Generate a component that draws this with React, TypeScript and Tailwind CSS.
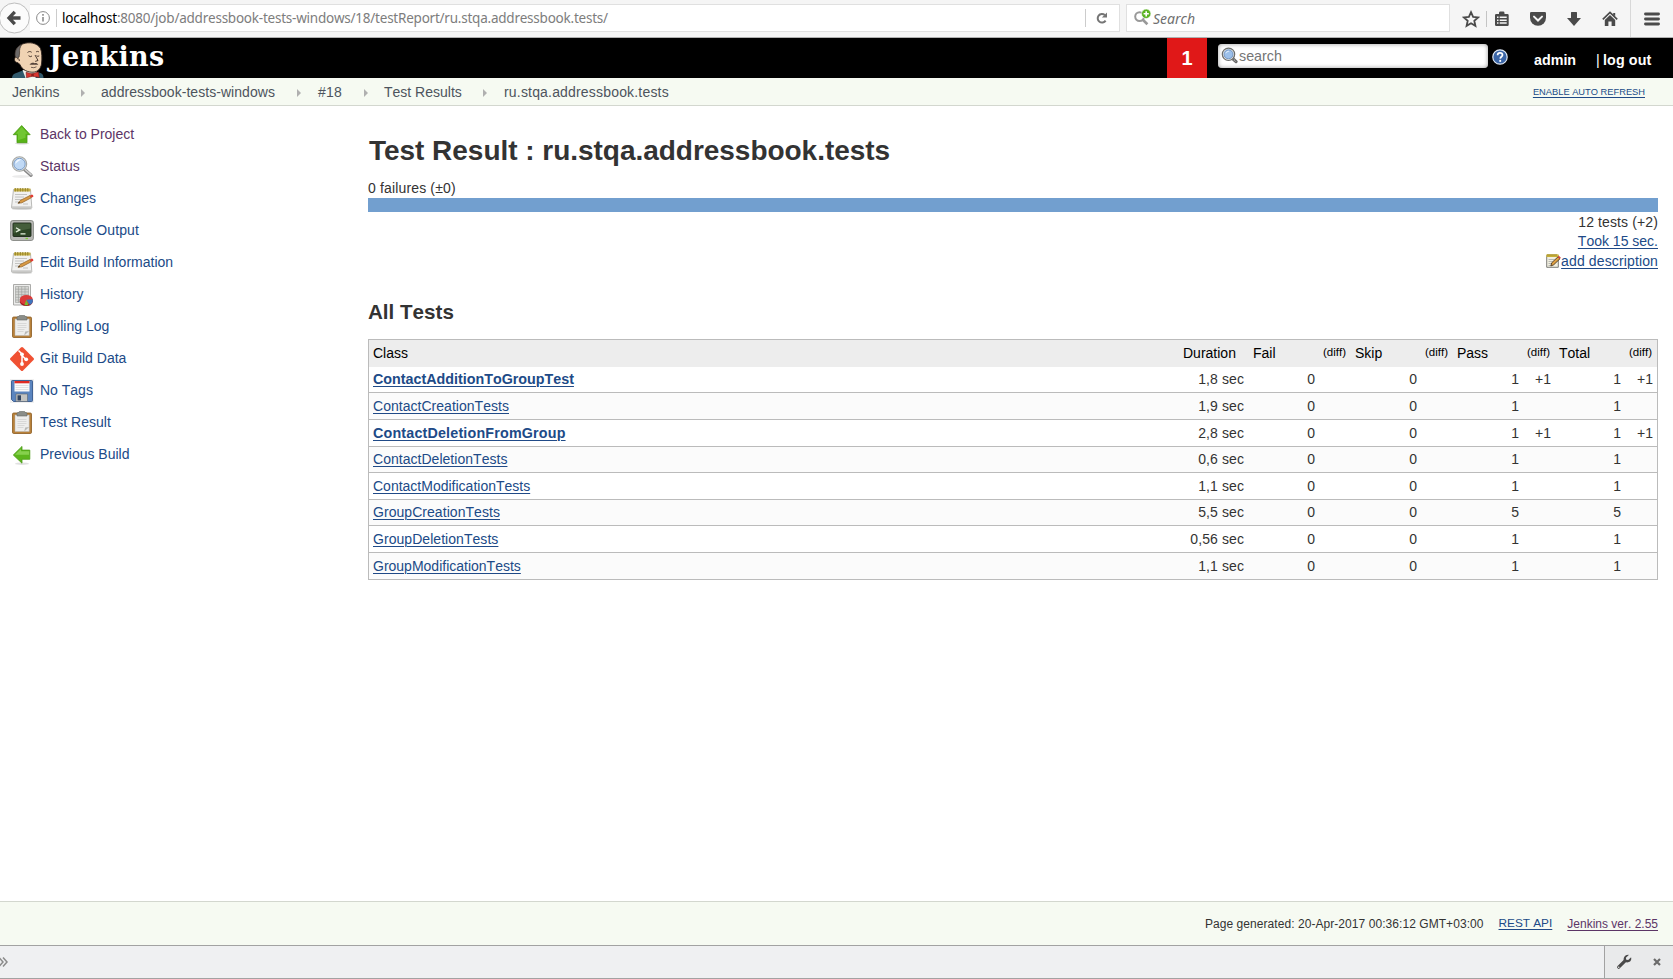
import React from "react";

type IconProps = { className?: string };

const BackArrow = () => (
  <svg viewBox="0 0 30 32" className="h-8 w-[30px] shrink-0">
    <circle cx="14.4" cy="16" r="15" fill="#fbfbfb" stroke="#bdbdbd" strokeWidth="1" />
    <path d="M20.500 16H10.500M14.800 9.800L9 16l5.800 6.200" fill="none" stroke="#4a4a4a" strokeWidth="3.300" />
  </svg>
);

const InfoIcon = () => (
  <svg viewBox="0 0 16 16" className="size-4 shrink-0">
    <circle cx="8" cy="8" r="6.4" fill="none" stroke="#8a8a8a" />
    <path d="M8 7v4.6M8 4v1.7" stroke="#8a8a8a" strokeWidth="1.6" />
  </svg>
);

const ReloadIcon = () => (
  <svg viewBox="0 0 14 14" className="size-3.5 shrink-0">
    <path d="M10.6 9.6A4.3 4.3 0 1 1 9.8 4" fill="none" stroke="#757575" strokeWidth="2" />
    <path d="M12 1.500v5.100H6.900z" fill="#757575" />
  </svg>
);

const BrowserSearchIcon = () => (
  <svg viewBox="0 0 20 18" className="h-[18px] w-5 shrink-0">
    <circle cx="6.6" cy="7.600" r="4.4" fill="none" stroke="#999" strokeWidth="2" />
    <path d="M9.8 10.800l4.600 4.400" stroke="#999" strokeWidth="2.6" />
    <circle cx="13.2" cy="4.800" r="4.700" fill="#5bb321" stroke="#fff" strokeWidth=".6" />
    <path d="M13.2 2.200v5.200M10.600 4.800h5.200" stroke="#fff" strokeWidth="1.6" />
  </svg>
);

const StarIcon = () => (
  <svg viewBox="0 0 18 18" className="size-[18px] shrink-0">
    <path d="M9 2.200l2.1 4.700 5 .5-3.800 3.400 1.100 5L9 13.200l-4.400 2.600 1.100-5L1.900 7.400l5-.5z" fill="none" stroke="#4a4a4a" strokeWidth="1.8" />
  </svg>
);

const ClipboardIcon = () => (
  <svg viewBox="0 0 16 16" className="size-4 shrink-0">
    <path d="M1 4.200Q1 3 2.200 3H5V2q0-1.400 1.400-1.400h2.700Q10.500.6 10.500 2v1h3q1.200 0 1.200 1.200v9.500q0 1.300-1.200 1.300H2.200Q1 15 1 13.700z" fill="#4a4a4a" />
    <path d="M3 6.300h1.500M5.700 6.300h7M3 9.200h1.500M5.700 9.200h7M3 12.100h1.500M5.700 12.100h7" stroke="#f5f5f5" strokeWidth="1.500" />
  </svg>
);

const PocketIcon = () => (
  <svg viewBox="0 0 18 16" className="h-4 w-[18px] shrink-0">
    <path d="M2.300 1h13.400Q17 1 17 2.300v4.500a8 8 0 0 1-16 0V2.300Q1 1 2.300 1z" fill="#4a4a4a" />
    <path d="M5 5.600l4 3.900 4-3.900" fill="none" stroke="#f5f5f5" strokeWidth="2" strokeLinecap="round" />
  </svg>
);

const DownloadIcon = () => (
  <svg viewBox="0 0 16 16" className="size-4 shrink-0">
    <path d="M5 1.600Q5 1 5.600 1h4.800q.6 0 .6.6V7h4L8 15 1 7h4z" fill="#4a4a4a" />
  </svg>
);

const HomeIcon = () => (
  <svg viewBox="0 0 16 16" className="size-4 shrink-0">
    <path d="M.8 8.300L8 1.400l7.200 6.900" fill="none" stroke="#4a4a4a" strokeWidth="1.700" />
    <path d="M2.800 9L8 4l5.200 5v6H9.600v-4.500H6.400V15H2.800z" fill="#4a4a4a" />
    <path d="M11.200 2h2v3.500l-2-2z" fill="#4a4a4a" />
  </svg>
);

const MenuIcon = () => (
  <svg viewBox="0 0 16 14" className="h-3.5 w-4 shrink-0">
    <path d="M1.500 2h13M1.500 7h13M1.500 12h13" stroke="#4a4a4a" strokeWidth="2.900" strokeLinecap="round" />
  </svg>
);

const ButlerLogo = () => (
  <svg viewBox="0 0 34 36" className="h-9 w-[34px] shrink-0">
    <path d="M1 36c0-3 2-4.500 5-5.200l5-2 14 1 4.500 1.200c2 .6 3 2.500 3 5z" fill="#31596b" />
    <path d="M11.500 28l3 8h10l1.500-7z" fill="#f4f1ec" />
    <path d="M6.500 20.500C3.300 20.500 2.800 17 4.500 15 3.500 9 6 4 11.500 2 18-.5 26.500.8 29.500 6.500 31 10 31.200 17 30.500 22c-.8 5-4 8-8.500 8.200-5 .2-11-2.200-13-7.700z" fill="#f0d3b3" stroke="#2e231d" strokeWidth=".9" />
    <path d="M4.300 15C3.200 9.500 5.500 4.500 11 2.300 9 5 8.300 7.500 8.600 11l-.5 4-1.500 1z" fill="#6c6968" stroke="#2e231d" strokeWidth=".6" />
    <path d="M5.800 17c1.500-1 2.700 0 2.500 2M16.500 10.500c1.500-1.300 3-1.200 4.200-.2M25 10c1-.8 2-.8 3 0M17.500 13.700q1.800 1.800 3.500.3M25.500 13.700q1.200 1.200 2.700.2M24 13l3 5.500-2.800.9" fill="none" stroke="#3b2a22" strokeWidth=".9" />
    <path d="M18.500 22.600c1.500-1.700 3.500-2.200 5-1.300 1.500-.6 3 .2 3.800 1.400-2.500-.3-5.500.6-8.800-.1z" fill="#54433a" />
    <path d="M20 25.300q3 1.100 5.500-.5" fill="none" stroke="#54433a" strokeWidth=".8" />
    <path d="M15 30.200l6 1.600 6.500-2 .8 5.700-6.800-1.300-6 1.600z" fill="#d8352f" stroke="#5b1513" strokeWidth=".5" />
    <path d="M20.300 31.600h2.500v2.800h-2.500z" fill="#8e1d1a" />
  </svg>
);

const Magnifier = ({ className }: IconProps) => (
  <svg viewBox="0 0 24 24" className={className}>
    <ellipse cx="11" cy="21.500" rx="9" ry="1.500" fill="#000" opacity=".08" />
    <path d="M14.500 14.500l6.500 5.700" stroke="#858585" strokeWidth="3.400" strokeLinecap="round" />
    <path d="M15 14.500l6 5.200" stroke="#d0d0d0" strokeWidth="1.600" strokeLinecap="round" />
    <circle cx="9.500" cy="9" r="7.200" fill="#e4e6e4" stroke="#a5a7a4" strokeWidth="1.100" />
    <circle cx="9.500" cy="9" r="5.700" fill="#c0d9f5" stroke="#6f94c4" strokeWidth=".9" />
    <path d="M5.300 9a4.500 4.500 0 0 1 6-4.500C9 6 7 7 5.300 9z" fill="#f2f8ff" />
  </svg>
);

const HeaderLens = () => (
  <svg viewBox="0 0 17 17" className="size-[17px] shrink-0">
    <path d="M11 11l4 3.600" stroke="#666" strokeWidth="3.200" strokeLinecap="round" />
    <path d="M11.500 11.500l3.500 3" stroke="#bbb" strokeWidth="1.200" strokeDasharray="1 1" />
    <circle cx="7.500" cy="7.300" r="6.200" fill="#e8eaea" stroke="#6b6d6b" strokeWidth="1.200" />
    <circle cx="7.500" cy="7.300" r="4.500" fill="#9cc0ea" stroke="#6b8fbd" strokeWidth=".9" />
    <path d="M4.500 7a3.300 3.300 0 0 1 4.200-3C7 5 5.500 5.600 4.500 7z" fill="#e6f1fc" />
  </svg>
);

const HelpIcon = () => (
  <svg viewBox="0 0 16 16" className="size-4 shrink-0">
    <circle cx="8" cy="8" r="7.200" fill="#3b66a8" stroke="#dfe8f4" strokeWidth="1.200" />
    <path d="M5.600 6.200C5.600 4.600 6.700 3.900 8 3.900s2.500.8 2.500 2.100C10.500 7.700 8.300 7.800 8.200 9.600" fill="none" stroke="#fff" strokeWidth="1.700" />
    <circle cx="8.200" cy="11.900" r="1.050" fill="#fff" />
  </svg>
);

const UpArrow = ({ className }: IconProps) => (
  <svg viewBox="0 0 24 24" className={className}>
    <ellipse cx="12" cy="20.300" rx="7" ry="1.200" fill="#000" opacity=".15" />
    <path d="M11.700 2.500L20.200 11.700H17V19.700H7V11.700H3.200z" fill="#58b317" stroke="#4a9c12" strokeWidth=".8" />
    <path d="M11.700 4L17.700 10.700h-2.200v4L8 17.200v-6.500H5.700z" fill="#80d140" opacity=".65" />
  </svg>
);

const LeftArrow = ({ className }: IconProps) => (
  <svg viewBox="0 0 24 24" className={className}>
    <ellipse cx="12" cy="20.700" rx="7" ry="1.200" fill="#000" opacity=".12" />
    <path d="M3.300 12L12 3.400v3.700h7.800v9.200H12v3.900z" fill="#5cb51d" stroke="#4c9d16" strokeWidth=".8" />
    <path d="M5 11.800l6-5.700v2.200h8v3.500z" fill="#98dc62" opacity=".7" />
  </svg>
);

const Notepad = ({ className }: IconProps) => (
  <svg viewBox="0 0 24 24" className={className}>
    <ellipse cx="12" cy="22" rx="10" ry="1" fill="#000" opacity=".15" />
    <path d="M3.500 2.500h17l1.300 18q0 .8-.8.800H2.300q-.8 0-.8-.8z" fill="#f1f1f0" stroke="#a9aaa7" strokeWidth=".8" />
    <path d="M2 19.300h19.600v1.700H2z" fill="#c9c9c7" />
    <path d="M4 1.500h16.500v3H4z" fill="#c9b24a" />
    <path d="M5.300 1v3.500M7.800 1v3.500M10.300 1v3.500M12.800 1v3.500M15.300 1v3.500M17.800 1v3.500" stroke="#8c7a24" strokeWidth=".9" />
    <path d="M5 7.500h12M5 10h9M5 12.500h7M5 15h4M13 17h5" stroke="#bdbdbb" strokeWidth=".9" />
    <path d="M8 16.300l2.200-2.800L20 8.500l1.200 2.300-9.400 5z" fill="#d99a45" stroke="#8c5a1b" strokeWidth=".7" />
    <path d="M8 16.300l1.200-1.500.9 1.100z" fill="#333" />
    <path d="M20 8.500l2-.9q1.500.3 1.400 2.200l-2.200 1z" fill="#e23b34" />
  </svg>
);

const SmallNotepad = () => (
  <svg viewBox="0 0 16 16" className="size-4 shrink-0">
    <path d="M1.700 2.300h11.600v12H1.700z" fill="#f1efdf" stroke="#7d7d78" />
    <path d="M1.500 1.300h12V4h-12z" fill="#d9bf3e" />
    <path d="M3 1v2.600M5 1v2.600M7 1v2.600M9 1v2.600M11 1v2.600" stroke="#8c7a24" strokeWidth=".8" />
    <path d="M3.500 6.500h6M3.500 8.500h4M3.500 10.500h3M3.500 12.500h2" stroke="#aaa" strokeWidth=".8" />
    <path d="M5.800 13l1-3.300L13 3.800l2 1.900-6.300 6.100z" fill="#e0a040" stroke="#4b3720" strokeWidth=".9" />
    <path d="M12.700 4l1.200-1.200 2 2L14.800 6z" fill="#d6473c" />
  </svg>
);

const Terminal = ({ className }: IconProps) => (
  <svg viewBox="0 0 24 24" className={className}>
    <rect x=".6" y="1.500" width="22.800" height="20" rx="2.200" fill="#b9bab6" stroke="#858783" strokeWidth=".9" />
    <rect x="3" y="4" width="18" height="13.500" rx=".8" fill="#2d4526" stroke="#1b2718" strokeWidth=".9" />
    <path d="M3.500 4.500h17v5q-9 1-17 5z" fill="#54704a" opacity=".6" />
    <path d="M6 8.800l3.700 2.100L6 13M10.500 14.800h5" fill="none" stroke="#e6f2df" strokeWidth="1.300" />
    <path d="M15.500 19.500h2.500" stroke="#7ecb3a" strokeWidth="1.300" />
  </svg>
);

const HistoryChart = ({ className }: IconProps) => (
  <svg viewBox="0 0 24 24" className={className}>
    <path d="M3.500 1.500h17v20.500h-17z" fill="#ececeb" stroke="#a3a3a0" strokeWidth=".9" />
    <path d="M5.500 3.500h13v16h-13z" fill="#d5d6d3" />
    <path d="M5.500 3.500h13M5.500 6.200h13M5.500 8.900h13M5.500 11.600h13M5.500 14.300h13M5.500 17h13M5.500 19.500h13M5.500 3.500v16M8.500 3.500v16M11.700 3.500v16M15 3.500v16M18.500 3.500v16" stroke="#9c9e9a" strokeWidth=".6" />
    <ellipse cx="16.300" cy="18.200" rx="6.500" ry="4.900" fill="#9d1b1b" />
    <ellipse cx="16.300" cy="16.800" rx="6.500" ry="4.900" fill="#dc3c3a" />
    <path d="M16.300 16.800l6.500-.6v2.500q-.6 2-3 3.200z" fill="#3f75bd" />
    <path d="M16.300 16.800l2 5q-2 .9-3.800.2z" fill="#73c02e" />
  </svg>
);

const Clipboard = ({ className }: IconProps) => (
  <svg viewBox="0 0 24 24" className={className}>
    <rect x="2.500" y="2" width="19" height="20.500" rx="1.200" fill="#b8813a" stroke="#8a5a1f" strokeWidth=".8" />
    <path d="M5 4h14.200v16.500H5z" fill="#eeeeed" stroke="#b7b7b4" strokeWidth=".5" />
    <path d="M7.500 8.500h9M7.500 10.500h9M7.500 12.500h9M7.500 14.500h7M7.500 16.500h6" stroke="#d2d2d0" strokeWidth=".8" />
    <path d="M19.200 16l-5 4.500 1-4z" fill="#b9b9b6" />
    <path d="M7 2.600q0-1.100 1.200-1.100H9Q9 .2 10.400.2h3.200Q15 .2 15 1.500h.8q1.200 0 1.200 1.100V5H7z" fill="#8b8e89" stroke="#666964" strokeWidth=".6" />
  </svg>
);

const GitLogo = ({ className }: IconProps) => (
  <svg viewBox="0 0 24 24" className={className}>
    <path d="M10.900.5q1.100-1 2.200 0l10.400 10.400q1 1.100 0 2.200L13.100 23.500q-1.100 1-2.200 0L.5 13.100q-1-1.100 0-2.200z" fill="#f05133" />
    <path d="M8.500 3.500l3.500 3.500v10M12 8.500l4 4" fill="none" stroke="#fff" strokeWidth="1.500" />
    <circle cx="12" cy="7.300" r="1.900" fill="#fff" />
    <circle cx="12" cy="17" r="1.900" fill="#fff" />
    <circle cx="16.200" cy="12.300" r="1.900" fill="#fff" />
  </svg>
);

const Floppy = ({ className }: IconProps) => (
  <svg viewBox="0 0 24 24" className={className}>
    <path d="M0 0h24v24H0z" fill="#f0f0f0" />
    <path d="M1.500 2.300q0-.8.8-.8h19.400q.8 0 .8.800v19.400q0 .8-.8.800H3.500l-2-2z" fill="#5b85bf" stroke="#36588c" strokeWidth=".9" />
    <path d="M4.500 2h15v10.500h-15z" fill="#fafafa" />
    <path d="M4.500 2h15v2.300h-15z" fill="#e02a22" />
    <path d="M5.500 6.500h13M5.500 8.500h13M5.500 10.500h13" stroke="#d5d5d5" strokeWidth=".7" />
    <path d="M6 15h11.500v7.500H6z" fill="#c3c4c1" stroke="#5b6470" strokeWidth=".6" />
    <path d="M7.500 16.300h3.500v5.200H7.500z" fill="#30435f" />
  </svg>
);

const Wrench = () => (
  <svg viewBox="0 0 16 16" className="size-4 shrink-0">
    <path d="M2.700 13.200L9 6.900" stroke="#4a4a4a" strokeWidth="3.200" strokeLinecap="round" />
    <path d="M12.800.9L9.900 3.800l.3 2 2 .3 2.900-2.900c.7 2.300-.4 4.200-2.200 4.900-2 .8-4.200.1-5-1.500C6.900 4.200 9 .4 12.800.9z" fill="#4a4a4a" />
    <circle cx="2.700" cy="13.300" r=".8" fill="#ddd" />
  </svg>
);

const CloseIcon = () => (
  <svg viewBox="0 0 8 8" className="size-2 shrink-0">
    <path d="M1 1l6 6M7 1L1 7" stroke="#6b6b6b" strokeWidth="2.200" />
  </svg>
);

const tasks = [
  { label: "Back to Project", Icon: UpArrow, visited: true },
  { label: "Status", Icon: Magnifier, visited: true },
  { label: "Changes", Icon: Notepad },
  { label: "Console Output", Icon: Terminal, wide: true },
  { label: "Edit Build Information", Icon: Notepad },
  { label: "History", Icon: HistoryChart },
  { label: "Polling Log", Icon: Clipboard },
  { label: "Git Build Data", Icon: GitLogo },
  { label: "No Tags", Icon: Floppy },
  { label: "Test Result", Icon: Clipboard },
  { label: "Previous Build", Icon: LeftArrow },
];

const rows = [
  { name: "ContactAdditionToGroupTest", duration: "1,8 sec", total: 1, diff: "+1", height: "h-[26px]", tracking: "tracking-normal" },
  { name: "ContactCreationTests", duration: "1,9 sec", total: 1, diff: "", height: "h-[27px]", tracking: "tracking-[0.030px]" },
  { name: "ContactDeletionFromGroup", duration: "2,8 sec", total: 1, diff: "+1", height: "h-[27px]", tracking: "tracking-[0.180px]" },
  { name: "ContactDeletionTests", duration: "0,6 sec", total: 1, diff: "", height: "h-[26px]", tracking: "tracking-[0.030px]" },
  { name: "ContactModificationTests", duration: "1,1 sec", total: 1, diff: "", height: "h-[27px]", tracking: "tracking-normal" },
  { name: "GroupCreationTests", duration: "5,5 sec", total: 5, diff: "", height: "h-[26px]", tracking: "tracking-[0.050px]" },
  { name: "GroupDeletionTests", duration: "0,56 sec", total: 1, diff: "", height: "h-[27px]", tracking: "tracking-[0.050px]" },
  { name: "GroupModificationTests", duration: "1,1 sec", total: 1, diff: "", height: "h-[26px]", tracking: "tracking-normal" },
];

const headings = ["Class", "Duration", "Fail", "(diff)", "Skip", "(diff)", "Pass", "(diff)", "Total", "(diff)"];
const columns = "grid grid-cols-[810px_70px_70px_32px_70px_32px_70px_32px_70px_32px]";
const link = "underline underline-offset-[1.500px] decoration-1";

function BrowserBar() {
  return (
    <div className="flex h-[38px] shrink-0 items-start border-b border-[#b0b0b0] bg-[#f5f5f5] font-['Noto_Sans','Open_Sans',sans-serif] text-[14px]">
      <div className="pt-0.5"><BackArrow /></div>
      <div className="mt-1 flex h-7 w-[1090px] items-center border-y border-r border-[#e0e0e0] bg-white pl-[5px]">
        <InfoIcon />
        <div className="ml-[5px] h-[18px] w-px bg-[#ccc]" />
        <div className="ml-[5px] w-[1023px] whitespace-nowrap pt-px text-[13.500px] tracking-[-0.230px] text-[#7d7d7d]">
          <span className="text-black">localhost</span>:8080/job/addressbook-tests-windows/18/testReport/ru.stqa.addressbook.tests/
        </div>
        <div className="mr-[9px] h-[18px] w-px bg-[#ccc]" />
        <ReloadIcon />
      </div>
      <div className="ml-1.5 mt-1 flex h-7 w-[324px] items-center border border-[#e0e0e0] bg-white pl-1.5">
        <BrowserSearchIcon />
        <span className="pt-px italic text-[#707070]">Search</span>
      </div>
      <div className="flex h-[37px] items-center">
        <div className="ml-3 w-[18px]"><StarIcon /></div>
        <div className="ml-[6px] h-4 w-px bg-[#c4c4c4]" />
        <div className="ml-[7px] w-4"><ClipboardIcon /></div>
        <div className="ml-[19px]"><PocketIcon /></div>
        <div className="ml-[19px]"><DownloadIcon /></div>
        <div className="ml-5"><HomeIcon /></div>
        <div className="ml-[12px] h-[37px] w-px bg-[#d8d8d8]" />
        <div className="ml-[13px]"><MenuIcon /></div>
      </div>
    </div>
  );
}

function Header() {
  return (
    <header className="flex h-10 shrink-0 items-start bg-black text-white">
      <div className="ml-[11px] mt-1"><ButlerLogo /></div>
      <div className="ml-1 mt-[3px] w-[1118px] font-['DejaVu_Serif',serif] text-[27px] font-bold leading-8 tracking-[0.300px]">Jenkins</div>
      <div className="flex h-10 w-10 items-center justify-center bg-[#e01818] text-[20px] font-bold">1</div>
      <div className="ml-[11px] mt-1.5 flex h-6 w-[270px] items-center rounded bg-white pl-[3px] shadow-[inset_0_0_4px_#999]">
        <div className="-mt-0.5"><HeaderLens /></div>
        <span className="ml-px pt-px text-[14.300px] text-[#757575]">search</span>
      </div>
      <div className="ml-[4px] mt-[11px]"><HelpIcon /></div>
      <div className="ml-[26px] mt-3 w-[62px] text-[14.300px] font-bold leading-5">admin</div>
      <div className="mt-3 w-[7px] text-[14.300px] leading-5">|</div>
      <div className="mt-3 whitespace-nowrap text-[14.300px] font-bold leading-5 tracking-[0.100px]">log out</div>
    </header>
  );
}

const CrumbArrow = () => (
  <svg viewBox="0 0 4 8" className="h-2 w-1 shrink-0"><path d="M0 0l4 4-4 4z" fill="#b0b0b0" /></svg>
);

function Breadcrumbs() {
  return (
    <nav className="flex h-7 shrink-0 items-center whitespace-nowrap border-b border-[#d3d7cf] bg-[#f6faf2] pl-3 pt-0.5 text-[14px] text-[#4d545d]">
      <div className="w-[69px]">Jenkins</div>
      <CrumbArrow />
      <div className="ml-4 w-[196px] tracking-[0.050px]">addressbook-tests-windows</div>
      <CrumbArrow />
      <div className="ml-[17px] w-[46px] tracking-[0.200px]">#18</div>
      <CrumbArrow />
      <div className="ml-4 w-[99px]">Test Results</div>
      <CrumbArrow />
      <div className="ml-[17px] tracking-[0.180px]">ru.stqa.addressbook.tests</div>
      <a className={`ml-auto mr-7 text-[9.300px] text-[#204a87] ${link}`}>ENABLE AUTO REFRESH</a>
    </nav>
  );
}

function ResultsTable() {
  return (
    <div className="w-[1290px] border border-[#bbb] text-[14px]">
      <div className={`${columns} h-[27px] bg-[#ededed] text-black`}>
        {headings.map((heading, i) => (
          <div key={i} className={heading === "(diff)" ? "pl-1 text-[11.500px] leading-[25px]" : "pl-1 leading-[27px]"}>{heading}</div>
        ))}
      </div>
      {rows.map((row, i) => (
        <div
          key={row.name}
          className={`${columns} ${row.height} items-end whitespace-nowrap pb-[3px] text-right leading-5 ${i < rows.length - 1 ? "border-b border-[#bbb]" : ""} ${i % 2 ? "bg-[#fbfbfb]" : "bg-white"}`}
        >
          <div className="pl-1 text-left">
            <a className={`text-[#204a87] ${link} ${row.tracking} ${row.diff ? "text-[14.300px] font-bold" : ""}`}>{row.name}</a>
          </div>
          <div className="pr-[5px] tracking-[0.100px]">{row.duration}</div>
          <div className="pr-1">0</div>
          <div />
          <div className="pr-1">0</div>
          <div />
          <div className="pr-1">{row.total}</div>
          <div className="pr-1">{row.diff}</div>
          <div className="pr-1">{row.total}</div>
          <div className="pr-1">{row.diff}</div>
        </div>
      ))}
    </div>
  );
}

export default function App() {
  return (
    <div className="flex h-[979px] w-[1673px] flex-col overflow-hidden bg-white font-['Liberation_Sans',Arial,sans-serif] text-[14px] text-[#333] [font-kerning:none]">
      <BrowserBar />
      <Header />
      <Breadcrumbs />
      <div className="flex min-h-0 flex-1">
        <aside className="w-[368px] pl-2.5 pt-3">
          {tasks.map(({ label, Icon, visited, wide }) => (
            <div key={label} className="flex h-8 items-center gap-1.5">
              <Icon className="mt-0.5 size-6 shrink-0" />
              <a className={`pt-px ${visited ? "text-[#5c3566]" : "text-[#204a87]"} ${wide ? "tracking-[0.120px]" : ""}`}>{label}</a>
            </div>
          ))}
        </aside>
        <main className="w-[1290px]">
          <h1 className="mt-[27px] whitespace-nowrap pl-px text-[28px] font-bold leading-9 tracking-[-0.030px] [font-kerning:normal]">Test Result : ru.stqa.addressbook.tests</h1>
          <div className="mt-[9px] h-5 leading-5 tracking-[0.150px]">0 failures (±0)</div>
          <div className="h-3.5 bg-[#729fcf]" />
          <div className="flex flex-col items-end">
            <div className="leading-5 tracking-[0.120px]">12 tests (+2)</div>
            <a className={`leading-[19px] text-[#204a87] ${link}`}>Took 15 sec.</a>
            <div className="flex h-5 items-center"><SmallNotepad /><a className={`tracking-[0.130px] text-[#204a87] ${link}`}>add description</a></div>
          </div>
          <h2 className="mt-[29px] h-[39px] text-[20.600px] font-bold leading-6">All Tests</h2>
          <ResultsTable />
        </main>
      </div>
      <footer className="flex h-11 shrink-0 items-center justify-end whitespace-nowrap border-t border-[#d3d7cf] bg-[#f6faf2] pr-[15px] text-[12px]">
        <span className="tracking-[0.060px]">Page generated: 20-Apr-2017 00:36:12 GMT+03:00</span>
        <a className={`ml-[15px] text-[11.800px] text-[#204a87] ${link}`}>REST API</a>
        <a className={`ml-[15px] text-[#5c3566] ${link}`}>Jenkins ver. 2.55</a>
      </footer>
      <div className="flex h-[34px] shrink-0 items-stretch border-y border-[#a2a2a2] bg-[#eff0f2]">
        <svg viewBox="0 0 9 12" className="mt-[10px] h-3 w-[9px]"><path d="M-1 1.500L3 6l-4 4.500M3 1.500L7 6l-4 4.500" fill="none" stroke="#8b8b8b" strokeWidth="1.500" /></svg>
        <div className="ml-auto flex w-[69px] items-center border-l border-[#a2a2a2] bg-[#e9eaeb] pl-[11px]">
          <Wrench />
          <div className="ml-[21px]"><CloseIcon /></div>
        </div>
      </div>
    </div>
  );
}
